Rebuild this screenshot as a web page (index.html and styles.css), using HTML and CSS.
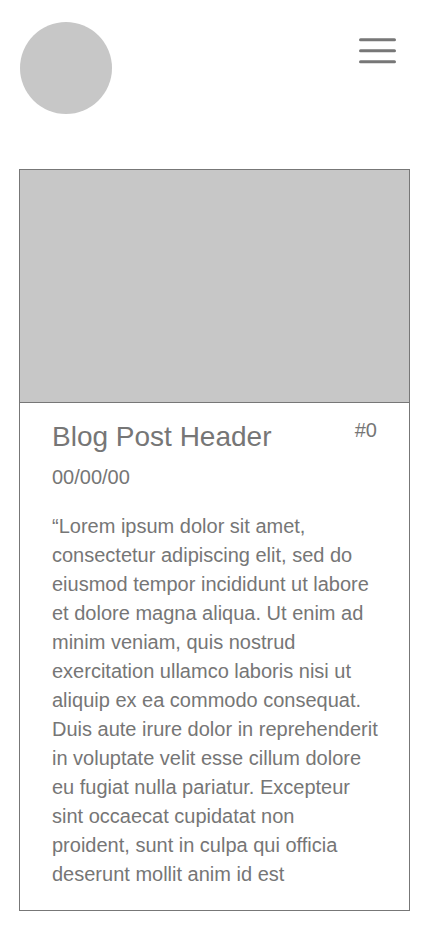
FILE: index.html
```html
<!DOCTYPE html>
<html lang="en">
<head>
<meta charset="utf-8">
<title>Blog</title>
<link rel="stylesheet" href="styles.css">
</head>
<body>
<header class="top">
  <div class="avatar"></div>
  <button class="menu" aria-label="Menu">
    <svg width="37" height="28" viewBox="0 0 37 28">
      <line x1="1.5" y1="3.75" x2="35.5" y2="3.75"/>
      <line x1="1.5" y1="14.75" x2="35.5" y2="14.75"/>
      <line x1="1.5" y1="25.75" x2="35.5" y2="25.75"/>
    </svg>
  </button>
</header>
<article class="card">
  <div class="card-image"></div>
  <div class="card-body">
    <div class="card-head">
      <div>
        <h1 class="title">Blog Post Header</h1>
        <p class="date">00/00/00</p>
      </div>
      <span class="num">#0</span>
    </div>
    <p class="text">“Lorem ipsum dolor sit amet, consectetur adipiscing elit, sed do eiusmod tempor incididunt ut labore et dolore magna aliqua. Ut enim ad minim veniam, quis nostrud exercitation ullamco laboris nisi ut aliquip ex ea commodo consequat. Duis aute irure dolor in reprehenderit in voluptate velit esse cillum dolore eu fugiat nulla pariatur. Excepteur sint occaecat cupidatat non proident,&nbsp;sunt in culpa qui officia deserunt mollit anim id est</p>
  </div>
</article>
</body>
</html>
```
FILE: styles.css
```css
html, body {
  margin: 0;
  padding: 0;
  background: #fff;
}
body {
  font-family: "Liberation Sans", Arial, sans-serif;
  color: #767676;
}
.top {
  display: flex;
  justify-content: space-between;
  align-items: flex-start;
  padding: 22px 34px 0 20px;
}
.avatar {
  width: 92px;
  height: 92px;
  border-radius: 50%;
  background: #c7c7c7;
}
.menu {
  border: 0;
  background: none;
  padding: 0;
  margin-top: 14px;
  display: block;
  cursor: pointer;
}
.menu svg {
  display: block;
}
.menu line {
  stroke: #777;
  stroke-width: 3;
  stroke-linecap: round;
}
.card {
  margin: 55px 20px 0 19px;
  border: 1px solid #777;
}
.card-image {
  height: 232px;
  background: #c7c7c7;
  border-bottom: 1px solid #777;
}
.card-body {
  padding: 18px 31px 21px 32px;
}
.card-head {
  display: flex;
  justify-content: space-between;
  align-items: flex-start;
}
.title {
  margin: 0;
  font-weight: normal;
  font-size: 28px;
  line-height: 32px;
}
.date {
  margin: 13px 0 0;
  font-size: 20px;
  line-height: 23px;
}
.num {
  font-size: 20px;
  line-height: 24px;
  margin-top: -3px;
  margin-right: 1px;
}
.text {
  margin: 23px 0 0;
  font-size: 20px;
  line-height: 29px;
}
```
